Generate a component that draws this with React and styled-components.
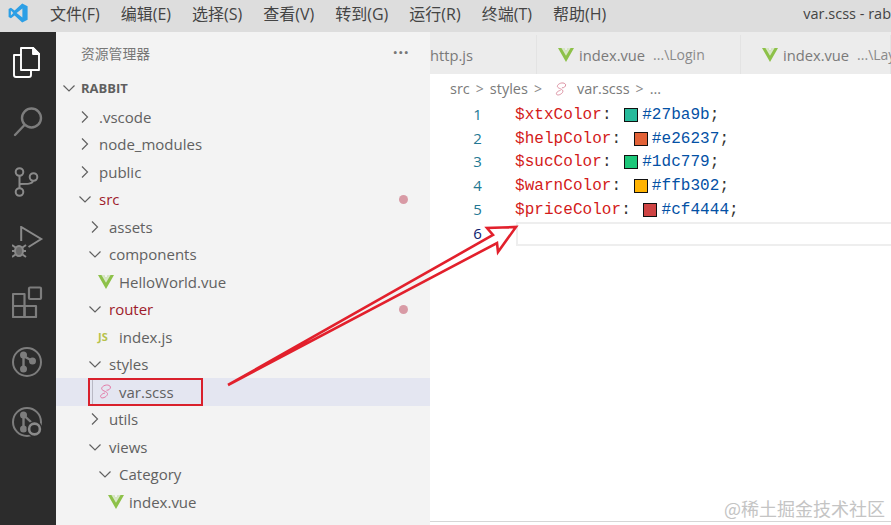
import React from 'react'
import styled, { createGlobalStyle } from 'styled-components'

const UI_FONT = `"Open Sans", "Noto Sans CJK SC", sans-serif`

const GlobalStyle = createGlobalStyle`
  html, body { margin: 0; padding: 0; background: #fff; }
  * { box-sizing: border-box; }
`

const menus = ['文件(F)', '编辑(E)', '选择(S)', '查看(V)', '转到(G)', '运行(R)', '终端(T)', '帮助(H)']

const tree = [
  { label: '.vscode', indent: 78, arrow: 'right' },
  { label: 'node_modules', indent: 78, arrow: 'right' },
  { label: 'public', indent: 78, arrow: 'right' },
  { label: 'src', indent: 78, arrow: 'down', changed: true },
  { label: 'assets', indent: 88, arrow: 'right' },
  { label: 'components', indent: 88, arrow: 'down' },
  { label: 'HelloWorld.vue', indent: 98, icon: 'vue' },
  { label: 'router', indent: 88, arrow: 'down', changed: true },
  { label: 'index.js', indent: 98, icon: 'js' },
  { label: 'styles', indent: 88, arrow: 'down' },
  { label: 'var.scss', indent: 98, icon: 'sass', selected: true },
  { label: 'utils', indent: 88, arrow: 'right' },
  { label: 'views', indent: 88, arrow: 'down' },
  { label: 'Category', indent: 98, arrow: 'down' },
  { label: 'index.vue', indent: 108, icon: 'vue' },
]

const code = [
  { name: '$xtxColor', value: '#27ba9b' },
  { name: '$helpColor', value: '#e26237' },
  { name: '$sucColor', value: '#1dc779' },
  { name: '$warnColor', value: '#ffb302' },
  { name: '$priceColor', value: '#cf4444' },
]

function VsLogo() {
  return (
    <svg width="20" height="20" viewBox="0 0 20 20">
      <path d="M14.2 0.6 L19.6 3.2 V16.8 L14.2 19.4 L6.6 12.4 L2.9 15.2 L0.6 14 V6 L2.9 4.8 L6.6 7.6 Z" fill="#2c9fe6" />
      <path d="M14.4 5.6 L8.6 10 L14.4 14.4 Z" fill="#dddddd" />
      <path d="M2.9 7.6 V12.4 L5.3 10 Z" fill="#dddddd" />
    </svg>
  )
}

function FilesIcon() {
  return (
    <svg width="32" height="32" viewBox="0 0 32 32" fill="none" stroke="#fff" strokeWidth="1.9" strokeLinejoin="round">
      <path d="M9 9 V2 H21 L27 8 V24 H19" />
      <path d="M21 2 V8 H27 Z" fill="#fff" />
      <path d="M2 9 H9 V24 H19 V29 Q19 31 17 31 H4 Q2 31 2 29 Z" />
    </svg>
  )
}

function SearchIcon() {
  return (
    <svg width="32" height="32" viewBox="0 0 32 32" fill="none" stroke="#7d7d7d" strokeWidth="2.4">
      <circle cx="19.5" cy="12" r="9.5" />
      <path d="M12.5 19 L3 29" strokeLinecap="round" />
    </svg>
  )
}

function GitIcon() {
  return (
    <svg width="32" height="32" viewBox="0 0 32 32" fill="none" stroke="#8a8a8a" strokeWidth="2">
      <circle cx="7.5" cy="6" r="3.8" />
      <circle cx="7.5" cy="26" r="3.8" />
      <circle cx="21.5" cy="11" r="3.8" />
      <path d="M7.5 10 V22 M21 15 C20 18 16 18 8 18" />
    </svg>
  )
}

function DebugIcon() {
  return (
    <svg width="32" height="32" viewBox="0 0 32 32" fill="none" stroke="#8a8a8a" strokeWidth="2">
      <path d="M9.2 15 V1 L29.2 13 L16.5 21" />
      <ellipse cx="7" cy="25" rx="4" ry="5" fill="#6a6a6a" />
      <path d="M0 19 L3.5 21.5 M0 25 H3 M0 31 L3.5 28.5 M14 19 L10.5 21.5 M14 25 H11 M14 31 L10.5 28.5" />
    </svg>
  )
}

function ExtensionsIcon() {
  return (
    <svg width="32" height="32" viewBox="0 0 32 32" fill="none" stroke="#7d7d7d" strokeWidth="2.2" strokeLinejoin="round">
      <rect x="1" y="8" width="11.5" height="12" />
      <rect x="1" y="20" width="11.5" height="11" />
      <rect x="12.5" y="20" width="11.5" height="11" />
      <rect x="17" y="1.5" width="12" height="11.5" rx="1" />
    </svg>
  )
}

function BranchCircleIcon({ search }) {
  return (
    <svg width="32" height="32" viewBox="0 0 32 32" fill="none" stroke="#7d7d7d" strokeWidth="2">
      <circle cx="15" cy="16" r="14" />
      <circle cx="11.5" cy="9" r="2.5" fill="#7d7d7d" />
      <circle cx="11.5" cy="23" r="2.5" fill="#7d7d7d" />
      <path d="M11.5 9 V23" strokeWidth="2.4" />
      {search ? (
        <g>
          <path d="M11.5 9 L20 17" strokeWidth="2.4" />
          <circle cx="22.5" cy="23" r="8" fill="#2c2c2c" stroke="none" />
          <circle cx="22.5" cy="23" r="5.4" stroke="#8a8a8a" strokeWidth="2.6" />
        </g>
      ) : (
        <g>
          <circle cx="20.5" cy="15" r="2.5" fill="#7d7d7d" />
          <path d="M11.5 10 L20.5 15" strokeWidth="2.4" />
        </g>
      )}
    </svg>
  )
}

function Chevron({ dir }) {
  return (
    <svg width="14" height="14" viewBox="0 0 14 14" fill="none" stroke="#616161" strokeWidth="1.2">
      {dir === 'down' ? <path d="M1.5 4.5 L7 10 L12.5 4.5" /> : <path d="M4 1.5 L9.5 7 L4 12.5" />}
    </svg>
  )
}

function VueIcon() {
  return (
    <VueSvg width="16" height="14" viewBox="0 0 16 14">
      <path d="M0 0 H6 L8 3.4 L10 0 H16 L8 14 Z" fill="#8dc149" />
      <path d="M3.4 0 H6 L8 3.4 L10 0 H12.6 L8 7.8 Z" fill="#f3f3f3" opacity="0.75" />
    </VueSvg>
  )
}

function SassIcon({ size = 15, color = '#e37ba8' }) {
  return (
    <svg width={size} height={size} viewBox="0 0 15 15" fill="none" stroke={color} strokeWidth="1">
      <path d="M12.5 3 C11.5 0 5.5 0.5 3.8 3.8 C2.5 7 9 7 9.5 9.5 C10 12 5 15 3 13.5 C1.5 12 4 9.5 7 9 M12.5 3 C12.5 5 10.5 6.5 8.5 6.2" />
    </svg>
  )
}

function Arrow() {
  return (
    <ArrowLayer width="891" height="525" viewBox="0 0 891 525">
      <path
        d="M228 385 L493 235 L487 228 L516 227 L498 252 L497 243 Z"
        fill="none"
        stroke="#e2202c"
        strokeWidth="2.6"
        strokeLinejoin="miter"
      />
    </ArrowLayer>
  )
}

export default function App() {
  return (
    <Window>
      <GlobalStyle />
      <TitleBar>
        <LogoSlot><VsLogo /></LogoSlot>
        <Menu>
          {menus.map((m) => <MenuItem key={m}>{m}</MenuItem>)}
        </Menu>
        <WindowTitle>var.scss - rab</WindowTitle>
      </TitleBar>
      <Body>
        <ActivityBar>
          <ActivityItem><FilesIcon /></ActivityItem>
          <ActivityItem><SearchIcon /></ActivityItem>
          <ActivityItem><GitIcon /></ActivityItem>
          <ActivityItem><DebugIcon /></ActivityItem>
          <ActivityItem><ExtensionsIcon /></ActivityItem>
          <ActivityItem><BranchCircleIcon /></ActivityItem>
          <ActivityItem><BranchCircleIcon search /></ActivityItem>
        </ActivityBar>
        <Sidebar>
          <SidebarHeader>
            <span>资源管理器</span>
            <MoreDots>···</MoreDots>
          </SidebarHeader>
          <RootRow>
            <Chevron dir="down" />
            <span>RABBIT</span>
          </RootRow>
          {tree.map((row) => (
            <TreeRow key={row.indent + row.label} $indent={row.indent} $selected={row.selected}>
              <RowIcon>
                {row.arrow && <Chevron dir={row.arrow} />}
                {row.icon === 'vue' && <VueIcon />}
                {row.icon === 'js' && <JsBadge>JS</JsBadge>}
                {row.icon === 'sass' && <SassIcon />}
              </RowIcon>
              <RowLabel $changed={row.changed}>{row.label}</RowLabel>
              {row.changed && <ChangeDot />}
              {row.selected && <Highlight />}
            </TreeRow>
          ))}
        </Sidebar>
        <Editor>
          <TabStrip>
            <Tab $width={107}><TabName>http.js</TabName></Tab>
            <Tab $width={204} $pad={21}>
              <VueIcon />
              <TabName>index.vue</TabName>
              <TabPath>...\Login</TabPath>
            </Tab>
            <Tab $width={150} $pad={21}>
              <VueIcon />
              <TabName>index.vue</TabName>
              <TabPath>...\Lay</TabPath>
            </Tab>
          </TabStrip>
          <Breadcrumb>
            <span>src</span><Sep>&gt;</Sep>
            <span>styles</span><Sep>&gt;</Sep>
            <CrumbIcon><SassIcon size={14} color="#d98a9c" /></CrumbIcon>
            <span>var.scss</span><Sep>&gt;</Sep>
            <span>...</span>
          </Breadcrumb>
          <Code>
            {code.map((line, i) => (
              <Line key={line.name}>
                <LineNo>{i + 1}</LineNo>
                <VarName>{line.name}</VarName>
                <Punct>: </Punct>
                <Swatch $color={line.value} />
                <Value>{line.value}</Value>
                <Punct>;</Punct>
              </Line>
            ))}
            <Line>
              <LineNo $active>6</LineNo>
              <CurrentLine />
            </Line>
          </Code>
          <BottomRule />
        </Editor>
      </Body>
      <Arrow />
      <Watermark>@稀土掘金技术社区</Watermark>
    </Window>
  )
}

const Window = styled.div`
  position: relative;
  width: 891px;
  height: 525px;
  overflow: hidden;
  display: flex;
  flex-direction: column;
  font-family: ${UI_FONT};
  background: #fff;
`

const TitleBar = styled.div`
  height: 32px;
  flex: none;
  padding-bottom: 6px;
  display: flex;
  align-items: center;
  background: #dddddd;
  color: #444;
  font-size: 16px;
`

const LogoSlot = styled.div`
  width: 50px;
  flex: none;
  padding-left: 8px;
  display: flex;
`

const Menu = styled.div`
  display: flex;
  gap: 21px;
`

const MenuItem = styled.div`
  white-space: nowrap;
`

const WindowTitle = styled.div`
  margin-left: auto;
  font-size: 14.5px;
  white-space: nowrap;
`

const Body = styled.div`
  flex: 1;
  min-height: 0;
  display: flex;
`

const ActivityBar = styled.div`
  width: 56px;
  flex: none;
  background: #2c2c2c;
  display: flex;
  flex-direction: column;
`

const ActivityItem = styled.div`
  height: 60px;
  display: flex;
  align-items: center;
  justify-content: center;
  padding-right: 1px;
`

const Sidebar = styled.div`
  width: 374px;
  flex: none;
  background: #f3f3f3;
  color: #616161;
  font-size: 15px;
`

const SidebarHeader = styled.div`
  height: 44px;
  padding: 0 21px 3px 25px;
  display: flex;
  align-items: center;
  justify-content: space-between;
  font-size: 13.8px;
  color: #777;
`

const MoreDots = styled.span`
  font-size: 20px;
  font-weight: 600;
  line-height: 1;
`

const RootRow = styled.div`
  height: 27px;
  padding: 0 0 3px 6px;
  display: flex;
  align-items: center;
  gap: 5px;
  font-size: 13px;
  font-weight: 700;
  color: #5f5f5f;
`

const TreeRow = styled.div`
  position: relative;
  height: 27.5px;
  padding-left: ${(p) => p.$indent - 56}px;
  padding-right: 22px;
  display: flex;
  align-items: center;
  background: ${(p) => (p.$selected ? '#e4e6f1' : 'transparent')};
`

const RowIcon = styled.div`
  width: 21px;
  flex: none;
  display: flex;
  align-items: center;
`

const RowLabel = styled.span`
  color: ${(p) => (p.$changed ? '#9e1b2b' : '#616161')};
  white-space: nowrap;
`

const JsBadge = styled.span`
  font-size: 11px;
  font-weight: 700;
  color: #b7c24a;
`

const ChangeDot = styled.span`
  width: 9px;
  height: 9px;
  margin-left: auto;
  border-radius: 50%;
  background: #d89aa5;
`

const Highlight = styled.span`
  position: absolute;
  left: 32px;
  top: 0;
  width: 115px;
  height: 28px;
  border: 2px solid #d9202c;

  &::after {
    content: '';
    position: absolute;
    left: 2px;
    top: 0;
    bottom: 0;
    width: 1px;
    background: #b9b9c4;
  }
`

const VueSvg = styled.svg`
  flex: none;
`

const Editor = styled.div`
  flex: 1;
  min-width: 0;
  display: flex;
  flex-direction: column;
`

const TabStrip = styled.div`
  height: 42px;
  flex: none;
  padding-top: 3px;
  display: flex;
  background: #ececec;
  overflow: hidden;
`

const Tab = styled.div`
  width: ${(p) => p.$width}px;
  flex: none;
  padding-left: ${(p) => p.$pad || 0}px;
  display: flex;
  align-items: center;
  border-right: 1px solid #e3e3e3;
  white-space: nowrap;
  font-size: 14.7px;
  color: #7a7a7a;
`

const TabName = styled.span`
  margin-left: 5px;
  &:first-child { margin-left: 0; }
`

const TabPath = styled.span`
  margin-left: 8px;
  font-size: 14px;
  color: #8a8a8a;
`

const Breadcrumb = styled.div`
  height: 29px;
  flex: none;
  padding-left: 20px;
  display: flex;
  align-items: center;
  gap: 6px;
  font-size: 14.5px;
  color: #7a7a7a;
`

const CrumbIcon = styled.span`
  display: flex;
  margin: 0 3px 0 6px;
`

const Sep = styled.span`
  color: #8a8a8a;
  font-size: 14px;
`

const Code = styled.div`
  font-family: "Liberation Mono", monospace;
  font-size: 16px;
  letter-spacing: 0.05px;
`

const Line = styled.div`
  height: 23.8px;
  display: flex;
  align-items: center;
  white-space: pre;
`

const LineNo = styled.span`
  width: 53px;
  flex: none;
  padding: 0 1px 2px 0;
  text-align: right;
  margin-right: 32px;
  font-family: "Open Sans", sans-serif;
  font-size: 15px;
  color: ${(p) => (p.$active ? '#0b216f' : '#237893')};
`

const VarName = styled.span`
  color: #d31a1a;
`

const Punct = styled.span`
  color: #333;
`

const Swatch = styled.span`
  width: 14px;
  height: 14px;
  margin: 0 4px 0 3px;
  flex: none;
  border: 1px solid #111;
  background: ${(p) => p.$color};
`

const Value = styled.span`
  color: #0451a5;
`

const CurrentLine = styled.span`
  flex: 1;
  height: 23.8px;
  margin-left: 1px;
  border: 2px solid #eeeeee;
  border-right: 0;
`

const BottomRule = styled.div`
  margin-top: auto;
  height: 4px;
  flex: none;
  border-top: 1px solid #d6d6d6;
`

const ArrowLayer = styled.svg`
  position: absolute;
  left: 0;
  top: 0;
  pointer-events: none;
`

const Watermark = styled.div`
  position: absolute;
  right: 6px;
  bottom: 4px;
  font-family: "Noto Sans CJK SC", sans-serif;
  font-size: 18px;
  color: #c4c4c4;
  white-space: nowrap;
`
